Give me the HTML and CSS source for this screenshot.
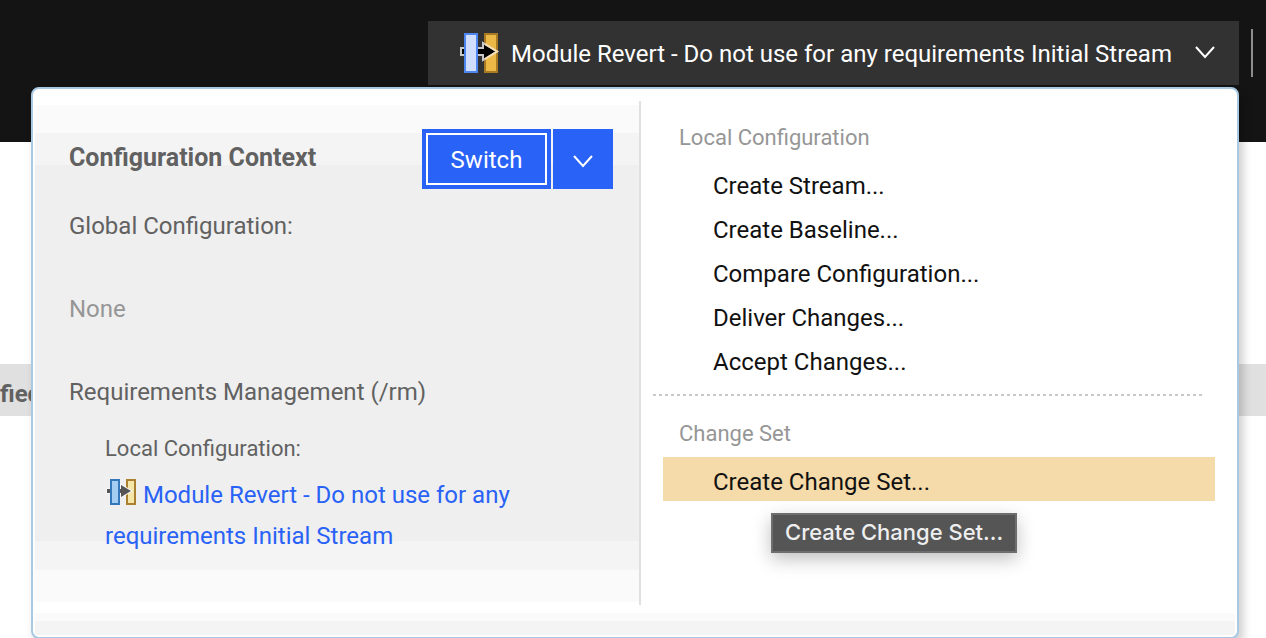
FILE: index.html
```
<!DOCTYPE html>
<html lang="en">
<head>
<meta charset="utf-8">
<title>Configuration Context</title>
<link rel="stylesheet" href="styles.css">
</head>
<body>
<header class="topbar">
  <button class="context-button" type="button" aria-expanded="true">
    <svg class="context-icon" width="40" height="40" viewBox="0 0 40 40" aria-hidden="true">
      <rect x="25" y="1" width="12" height="38" fill="#edb946" stroke="#a87a24" stroke-width="2"/>
      <path d="M1 15h22v-5l14 8.500-14 8.500v-5H1z" fill="#000" stroke="#c8c8c8" stroke-width="2"/>
      <path d="M25 11l12 7.500-12 7.500" fill="none" stroke="#f8dfb0" stroke-width="2"/>
      <rect x="5" y="1" width="12" height="38" fill="#d0ddfc" stroke="#4c86ee" stroke-width="2"/>
    </svg>
    <span class="context-name">Module Revert - Do not use for any requirements Initial Stream</span>
    <svg class="chevron" width="20" height="14" viewBox="0 0 20 14" aria-hidden="true"><path d="M1 1l9 10 9-10" fill="none" stroke="#fff" stroke-width="2"/></svg>
  </button>
  <span class="topbar-divider"></span>
</header>

<main class="page">
  <div class="column-header">fied</div>
</main>

<section class="panel" aria-label="Configuration menu">
  <div class="panel-body">
    <div class="context">
      <div class="context-head">
        <h2 class="context-title">Configuration Context</h2>
        <div class="split-button">
          <button class="switch" type="button">Switch</button>
          <button class="switch-more" type="button" aria-label="More switch options">
            <svg width="20" height="14" viewBox="0 0 20 14" aria-hidden="true"><path d="M1 1l9 10 9-10" fill="none" stroke="#fff" stroke-width="2"/></svg>
          </button>
        </div>
      </div>
      <p class="label">Global Configuration:</p>
      <p class="label none">None</p>
      <p class="label">Requirements Management (/rm)</p>
      <div class="local">
        <p class="sublabel">Local Configuration:</p>
        <a class="stream-link" href="#"><svg class="stream-icon" width="32" height="28" viewBox="0 0 32 28" aria-hidden="true">
          <rect x="22" y="2" width="8" height="24" fill="#f5e6a8" stroke="#aa8030" stroke-width="2"/>
          <path d="M2 11h14V7l10 6-10 6v-4H2z" fill="#555" stroke="#f8f8f8" stroke-width="2" paint-order="stroke"/>
          <rect x="6" y="2" width="8" height="24" fill="#a3cdf1" stroke="#3577bb" stroke-width="2"/>
        </svg> Module Revert - Do not use for any requirements Initial Stream</a>
      </div>
    </div>
    <nav class="actions">
      <h3 class="group-title">Local Configuration</h3>
      <ul class="group">
        <li><button class="action" type="button">Create Stream...</button></li>
        <li><button class="action" type="button">Create Baseline...</button></li>
        <li><button class="action" type="button">Compare Configuration...</button></li>
        <li><button class="action" type="button">Deliver Changes...</button></li>
        <li><button class="action" type="button">Accept Changes...</button></li>
      </ul>
      <div class="separator"></div>
      <h3 class="group-title">Change Set</h3>
      <ul class="group">
        <li class="with-tip">
          <button class="action active" type="button" aria-describedby="tip">Create Change Set...</button>
          <span class="tooltip" role="tooltip" id="tip">Create Change Set...</span>
        </li>
      </ul>
    </nav>
  </div>
  <div class="panel-footer"></div>
</section>
</body>
</html>
```

FILE: styles.css
```
* {
  box-sizing: border-box;
}

body {
  margin: 0;
  height: 100vh;
  overflow: hidden;
  position: relative;
  background: #fff;
  color: #616161;
  font-family: Roboto, "Liberation Sans", sans-serif;
  font-size: 24px;
  line-height: 32px;
}

h2, h3, p, ul {
  margin: 0;
  padding: 0;
}

ul {
  list-style: none;
}

button {
  border: 0;
  border-radius: 0;
  font: inherit;
  cursor: pointer;
}

.topbar {
  display: flex;
  justify-content: flex-end;
  gap: 12px;
  height: 142px;
  padding: 21px 13px 0 0;
  background: #141414;
}

.context-button {
  display: flex;
  align-items: center;
  min-width: 811px;
  height: 64px;
  padding: 0 24px 0 32px;
  background: #323232;
  color: #fff;
}

.context-icon {
  margin-right: 11px;
}

.context-name {
  flex: 1;
  padding-top: 2px;
  text-align: left;
}

.chevron {
  margin-left: 11px;
}

.topbar-divider {
  width: 2px;
  height: 48px;
  margin-top: 8px;
  background: #8d8d8d;
}

.page {
  padding-top: 222px;
}

.column-header {
  height: 52px;
  padding-top: 14px;
  background: #e0e0e0;
  font-weight: 700;
}

.panel {
  position: absolute;
  top: 87px;
  left: 31px;
  right: 27px;
  padding: 12px 2px 2px;
  background: #fff;
  border: 2px solid #a9c9e3;
  border-radius: 8px;
  box-shadow: 4px 6px 10px rgba(0, 0, 0, 0.2);
}

.panel-body {
  display: grid;
  grid-template-columns: 101fr 99fr;
}

.context {
  height: 504px;
  padding: 28px 26px 0 34px;
  border-right: 2px solid #e0e0e0;
  background: linear-gradient(#fff 4px, #fafafa 4px 32px, #f4f4f4 32px 64px, #efefef 64px 440px, #f4f4f4 440px 469px, #fafafa 469px 501px, #fff 501px);
}

.context-head {
  display: flex;
  justify-content: space-between;
  margin-bottom: 21px;
}

.context-title {
  padding-top: 13px;
  font-size: 25px;
  font-weight: 700;
}

.split-button {
  display: flex;
  gap: 2px;
}

.split-button button {
  height: 60px;
  background: #2962f6;
  color: #fff;
}

.split-button .switch {
  width: 129px;
  padding: 2px 0 0;
  border: 4px solid #2962f6;
  box-shadow: inset 0 0 0 2px #fff;
}

.switch-more {
  display: flex;
  align-items: center;
  justify-content: center;
  width: 60px;
  padding: 6px 0 0;
}

.label {
  margin-bottom: 51px;
}

.none {
  color: #969696;
}

.local {
  margin-top: -26px;
  padding-left: 36px;
}

.sublabel {
  margin-bottom: 10px;
  font-size: 22px;
}

.stream-link {
  display: block;
  max-width: 430px;
  color: #2962f6;
  line-height: 41px;
  text-decoration: none;
}

.stream-icon {
  vertical-align: -3px;
}

.actions {
  padding: 21px 20px 0 12px;
}

.group-title {
  padding: 0 26px 7px;
  color: #969696;
  font-size: 22px;
  font-weight: 400;
}

.group {
  padding-left: 10px;
}

.action {
  display: block;
  width: 100%;
  height: 44px;
  padding: 6px 50px 0;
  background: transparent;
  color: #111;
  text-align: left;
}

.active {
  background: #f5dbaa;
}

.separator {
  height: 2px;
  margin: 13px 12px 22px 0;
  background: repeating-linear-gradient(90deg, #c9c9c9 0 3px, transparent 3px 6px);
}

.with-tip {
  position: relative;
}

.tooltip {
  position: absolute;
  top: 56px;
  left: 108px;
  height: 40px;
  padding: 1px 12px;
  background: #555;
  border: 2px solid #6e6e6e;
  box-shadow: 0 6px 18px rgba(0, 0, 0, 0.25);
  color: #eee;
  font-family: Inter, sans-serif;
  font-size: 22px;
  font-weight: 500;
  white-space: nowrap;
}

.panel-footer {
  height: 22px;
  margin-top: 8px;
  background: linear-gradient(#fafafa 8px, #f4f4f4 8px);
}
```
